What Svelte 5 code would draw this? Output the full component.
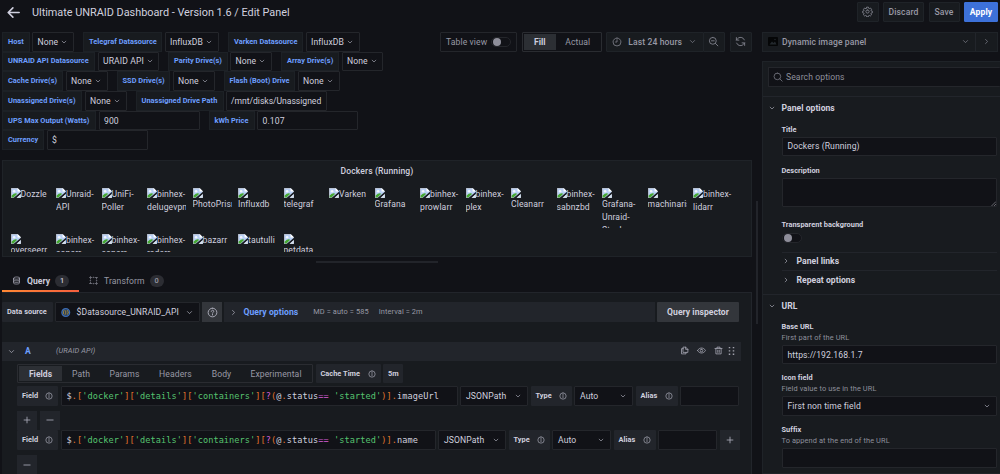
<script>
	// width of the label, then width of the control
	const variableRows = [
		[
			{ label: 'Host', lw: 27.5, value: 'None', w: 42, select: true },
			{ label: 'Telegraf Datasource', lw: 79, value: 'InfluxDB', w: 54.5, select: true },
			{ label: 'Varken Datasource', lw: 75, value: 'InfluxDB', w: 54.5, select: true }
		],
		[
			{ label: 'UNRAID API Datasource', lw: 93, value: 'URAID API', w: 61.5, select: true },
			{ label: 'Parity Drive(s)', lw: 59.5, value: 'None', w: 42, select: true },
			{ label: 'Array Drive(s)', lw: 58, value: 'None', w: 41, select: true }
		],
		[
			{ label: 'Cache Drive(s)', lw: 61, value: 'None', w: 42, select: true },
			{ label: 'SSD Drive(s)', lw: 53.5, value: 'None', w: 42, select: true },
			{ label: 'Flash (Boot) Drive', lw: 71.5, value: 'None', w: 42, select: true }
		],
		[
			{ label: 'Unassigned Drive(s)', lw: 80, value: 'None', w: 42, select: true },
			{ label: 'Unassigned Drive Path', lw: 88, value: '/mnt/disks/Unassigned', w: 101, tight: true }
		],
		[
			{ label: 'UPS Max Output (Watts)', lw: 94, value: '900', w: 101 },
			{ label: 'kWh Price', lw: 46, value: '0.107', w: 101 }
		],
		[{ label: 'Currency', lw: 42, value: '$', w: 101 }]
	]

	// wrap: the name does not fit beside the image and drops to the next line
	const dockers = [
		{ lines: ['Dozzle'] },
		{ lines: ['Unraid-', 'API'] },
		{ lines: ['UniFi-', 'Poller'] },
		{ lines: ['binhex-', 'delugevpn'] },
		{ wrap: true, lines: ['PhotoPrism'] },
		{ wrap: true, lines: ['Influxdb'] },
		{ wrap: true, lines: ['telegraf'] },
		{ lines: ['Varken'] },
		{ wrap: true, lines: ['Grafana'] },
		{ lines: ['binhex-', 'prowlarr'] },
		{ lines: ['binhex-', 'plex'] },
		{ wrap: true, lines: ['Cleanarr'] },
		{ lines: ['binhex-', 'sabnzbd'] },
		{ wrap: true, lines: ['Grafana-', 'Unraid-', 'Stack'] },
		{ wrap: true, lines: ['machinaris'] },
		{ lines: ['binhex-', 'lidarr'] },
		{ wrap: true, lines: ['overseerr'] },
		{ lines: ['binhex-', 'sonarr'] },
		{ lines: ['binhex-', 'sonarr'] },
		{ lines: ['binhex-', 'radarr'] },
		{ lines: ['bazarr'] },
		{ lines: ['tautulli'] },
		{ wrap: true, lines: ['netdata'] }
	]

	const queryTabs = [
		{ name: 'Fields', w: 43 },
		{ name: 'Path', w: 38 },
		{ name: 'Params', w: 49 },
		{ name: 'Headers', w: 53 },
		{ name: 'Body', w: 39 },
		{ name: 'Experimental', w: 70 }
	]

	const path = [
		['', '$'], ['o', '.['], ['g', "'docker'"], ['o', ']['], ['g', "'details'"], ['o', ']['],
		['g', "'containers'"], ['o', ']['], ['p', '?'], ['o', '('], ['', '@'], ['o', '.'],
		['', 'status'], ['p', '=='], ['', ' '], ['g', "'started'"], ['o', ')].']
	]
	const fields = [
		{ name: 'imageUrl', w: 397 },
		{ name: 'name', w: 375 }
	]

	const icons = {
		down: 'M6.5 9.5 12 15l5.5-5.5',
		right: 'M9.5 6.5 15 12l-5.5 5.5',
		back: 'M21 12H4M11 4.5 3.5 12l7.5 7.5',
		clock: 'M12 2.5a9.5 9.5 0 1 0 0 19a9.5 9.5 0 1 0 0-19M12 6.5V12H8.5',
		zoomOut: 'M10.5 3a7.5 7.5 0 1 0 0 15a7.5 7.5 0 1 0 0-15M16 16l5.5 5.5M7.5 10.5h6',
		search: 'M10.5 2.5a8 8 0 1 0 0 16a8 8 0 1 0 0-16M16.3 16.3 22 22',
		sync: 'M20.5 8.5A9 9 0 0 0 5 6.5L3 9M3 3.5V9h5.500M3.500 15.500A9 9 0 0 0 19 17.500L21 15M21 20.500V15h-5.500',
		gear: 'M9.500 5 10 2.500h4l.5 2.500 1.500.7 2.200-1.400 2.700 2.800-1.400 2 .6 1.600 2.400.6v3.700l-2.500.5-.6 1.500 1.400 2.200-2.700 2.700-2.100-1.400-1.500.6-.5 2.400h-4l-.5-2.500-1.500-.6-2.100 1.400-2.800-2.700 1.400-2.200-.6-1.500-2.400-.5v-3.700l2.500-.6.6-1.500-1.400-2 2.700-2.800L8 5.700zM12 8.500a3.500 3.500 0 1 0 0 7a3.500 3.500 0 1 0 0-7',
		database: 'M4 5.500C4 1.500 20 1.500 20 5.500S4 9.500 4 5.500V18.500C4 22.500 20 22.500 20 18.500V5.500M4 10c0 4 16 4 16 0M4 14.500c0 4 16 4 16 0',
		transform: 'M4 8V4h4M16 4h4v4M20 16v4h-4M8 20H4v-4M1.500 4H4V1.500M22.500 4H20M22.500 20H20v2.500M1.500 20H4M12 3v1.500M12 19.500v1.500M3 12h1.500M19.500 12h1.500',
		help: 'M12 2.500a9.500 9.500 0 1 0 0 19a9.500 9.500 0 1 0 0-19M9.200 9.500c.3-3.500 5.800-3.300 5.600 0-.2 2-2.800 1.700-2.800 4M12 16v1.500',
		info: 'M12 2.500a9.500 9.500 0 1 0 0 19a9.500 9.500 0 1 0 0-19M12 11v6M12 7v1.500',
		plus: 'M12 5v14M5 12h14',
		minus: 'M4.500 12h15',
		copy: 'M9 3h6l6 6v8H9zM15 3v6h6M9 7H4v14h12v-4',
		eye: 'M1.500 12C6 3 18 3 22.500 12 18 21 6 21 1.500 12M12 8.500a3.500 3.500 0 1 0 0 7a3.500 3.500 0 1 0 0-7',
		trash: 'M2.500 6.500h19M8 6V3h8v3M5 7v14h14V7M10 11v6M14 11v6'
	}
</script>

{#snippet icon(name, size = 10)}
	<svg class="icon" width={size} height={size} viewBox="0 0 24 24"><path d={icons[name]} /></svg>
{/snippet}

{#snippet broken()}
	<svg class="broken" width="10" height="10" viewBox="0 0 16 16">
		<path d="M.5.5h10l5 5v10H.5z" fill="#b9d0f5" stroke="#dfe3ea" />
		<path d="M10.500 0v5.500H16z" fill="#fff" />
		<circle cx="5" cy="5" r="2" fill="#f2f6fd" />
		<path d="M1 15v-3q5-5 9-3l-6 6z" fill="#46a832" />
		<path d="M4 16 16 6v3L9 16z" fill="#181b1f" />
		<path d="M9 15.500 15.500 10v5.500z" fill="#d6e0ee" />
	</svg>
{/snippet}

<div class="page">
	<div class="left">
		<header>
			{@render icon('back', 15)}
			<h1>Ultimate UNRAID Dashboard - Version 1.6 / Edit Panel</h1>
		</header>

		<div class="top">
			<div class="variables">
				{#each variableRows as row}
					<div class="var-row">
						{#each row as item}
							<div class="var">
								<div class="var-label" style="width: {item.lw}px">{item.label}</div>
								<div class="box" class:tight={item.tight} style="width: {item.w}px">
									<span>{item.value}</span>
									{#if item.select}{@render icon('down', 8)}{/if}
								</div>
							</div>
						{/each}
					</div>
				{/each}
			</div>

			<div class="toolbar">
				<div class="box table-view">Table view <i class="switch"></i></div>
				<div class="radio fill">
					<span class="active">Fill</span>
					<span>Actual</span>
				</div>
				<div class="button time">{@render icon('clock')}<b>Last 24 hours</b>{@render icon('down', 9)}</div>
				<div class="button zoom">{@render icon('zoomOut', 11)}</div>
				<div class="button refresh">{@render icon('sync', 11)}</div>
			</div>
		</div>

		<section class="preview">
			<h2>Dockers (Running)</h2>
			<div class="dockers">
				{#each dockers as docker}
					<div class="docker">
						{#if docker.wrap}
							<div class="image-line">{@render broken()}</div>
							{#each docker.lines as line}<div>{line}</div>{/each}
						{:else}
							{#each docker.lines as line, i}
								<div>{#if i === 0}{@render broken()}{/if}{line}</div>
							{/each}
						{/if}
					</div>
				{/each}
			</div>
		</section>

		<div class="splitter"></div>

		<nav>
			<div class="tab active">{@render icon('database', 9)}<span>Query</span><em>1</em></div>
			<div class="tab">{@render icon('transform', 9)}<span>Transform</span><em>0</em></div>
		</nav>

		<section class="queries">
			<div class="source">
				<div class="label ds">Data source</div>
				<div class="box picker">
					<svg width="11" height="11" viewBox="0 0 22 22">
						<circle cx="11" cy="11" r="9" fill="#263a58" stroke="#3c6db4" stroke-width="3" />
						<path d="M8 6q-2 0-2 3t-1 2q1 0 1 2t2 3M14 6q2 0 2 3t1 2q-1 0-1 2t-2 3M11 6v10" fill="none" stroke="#c9a63a" stroke-width="1.700" />
					</svg>
					<span>$Datasource_UNRAID_API</span>
					{@render icon('down', 9)}
				</div>
				<div class="help">{@render icon('help', 11)}</div>
				<div class="options-bar">
					{@render icon('right', 9)}
					<b>Query options</b>
					<small>MD = auto = 585</small>
					<small>Interval = 2m</small>
				</div>
				<div class="inspector">Query inspector</div>
			</div>

			<div class="query-head">
				{@render icon('down', 9)}
				<b>A</b>
				<em>(URAID API)</em>
				<div class="actions">
					{@render icon('copy', 9)}
					{@render icon('eye', 9)}
					{@render icon('trash', 9)}
					<svg width="8" height="10" viewBox="0 0 8 10">
						<path d="M1.500 1v9M5.500 1v9" stroke="#a0a1ac" stroke-width="1.500" stroke-dasharray="1.300 2" />
					</svg>
				</div>
			</div>

			<div class="editor">
				<div class="editor-row tabs-row">
					<div class="radio">
						{#each queryTabs as tab, i}
							<span class:active={i === 0} style="width: {tab.w}px">{tab.name}</span>
						{/each}
					</div>
					<div class="label cache">Cache Time {@render icon('info', 8)}</div>
					<div class="label five">5m</div>
				</div>

				{#each fields as field, i}
					<div class="editor-row">
						<div class="label field">Field {@render icon('info', 8)}</div>
						<div class="box code" style="width: {field.w}px">
							{#each path as [kind, text]}<span class={kind}>{text}</span>{/each}<span>{field.name}</span>
						</div>
						<div class="box json">JSONPath {@render icon('down', 8)}</div>
						<div class="label type">Type {@render icon('info', 8)}</div>
						<div class="box auto">Auto {@render icon('down', 8)}</div>
						<div class="label alias">Alias {@render icon('info', 8)}</div>
						<div class="box alias-input"></div>
						{#if i === 1}<div class="square">{@render icon('plus')}</div>{/if}
					</div>
					<div class="editor-row add-row">
						{#if i === 0}<div class="square">{@render icon('plus')}</div>{/if}
						<div class="square">{@render icon('minus')}</div>
					</div>
				{/each}
			</div>
		</section>
	</div>

	<div class="gutter"><i></i></div>

	<aside>
		<div class="buttons">
			<div class="button gear">{@render icon('gear', 11)}</div>
			<div class="button discard">Discard</div>
			<div class="button save">Save</div>
			<div class="button apply">Apply</div>
		</div>

		<div class="viz">
			<svg width="10" height="9" viewBox="0 0 20 18">
				<rect width="20" height="18" rx="2" fill="#050607" />
				<path d="m3 15 5-6 3 3 3-3 3 6z" fill="#23282d" />
				<circle cx="14" cy="5" r="1.500" fill="#23282d" />
			</svg>
			<b>Dynamic image panel</b>
			{@render icon('down', 9)}
			<div class="collapse">{@render icon('right', 9)}</div>
		</div>

		<div class="options">
			<div class="search-wrap">
				<div class="box search">{@render icon('search', 10)} Search options</div>
			</div>

			<div class="group">
				<h3>{@render icon('down', 8)}Panel options</h3>
				<div class="group-body">
					<h4 class="title-label">Title</h4>
					<div class="box">Dockers (Running)</div>
					<h4 class="description-label">Description</h4>
					<div class="box textarea">
						<svg width="5" height="5" viewBox="0 0 5 5"><path d="M.5 5 5 .5M3 5l2-2" stroke="#8b8d93" stroke-width=".7" /></svg>
					</div>
					<h4 class="transparent-label">Transparent background</h4>
					<i class="switch"></i>
					<div class="nested links">{@render icon('right', 8)}Panel links</div>
					<div class="nested repeat">{@render icon('right', 8)}Repeat options</div>
				</div>
			</div>

			<div class="group url">
				<h3>{@render icon('down', 8)}URL</h3>
				<div class="group-body">
					<div class="setting">
						<h4>Base URL</h4>
						<p>First part of the URL</p>
						<div class="box">https://192.168.1.7</div>
					</div>
					<div class="setting">
						<h4>Icon field</h4>
						<p>Field value to use in the URL</p>
						<div class="box spread">First non time field {@render icon('down', 8)}</div>
					</div>
					<div class="setting">
						<h4>Suffix</h4>
						<p>To append at the end of the URL</p>
						<div class="box"></div>
					</div>
				</div>
			</div>
		</div>
	</aside>
</div>

<style>
	:global(body) {
		background: #111217;
	}

	.page {
		display: flex;
		width: 1000px;
		height: 474px;
		overflow: hidden;
		background: #111217;
		color: #d0d0df;
		font-family: Roboto, sans-serif;
		font-size: 8.6px;
		letter-spacing: 0.1px;
		line-height: 12px;
		white-space: nowrap;
	}

	.page * {
		box-sizing: border-box;
	}

	h1, h2, h3, h4, p {
		margin: 0;
		font-weight: 500;
	}

	b {
		font-weight: 500;
	}

	.icon {
		flex: none;
		fill: none;
		stroke: currentColor;
		stroke-width: 2;
		stroke-linecap: round;
		stroke-linejoin: round;
		opacity: 0.8;
	}

	.left {
		width: 752px;
		flex: none;
		padding-left: 2px;
	}

	header {
		display: flex;
		align-items: center;
		gap: 11px;
		height: 25px;
		padding-left: 4px;
	}

	header .icon {
		stroke-width: 2.6;
		opacity: 1;
	}

	h1 {
		font-size: 10.9px;
		font-weight: 400;
		letter-spacing: -0.02px;
	}

	.top {
		display: flex;
		justify-content: space-between;
		height: 135px;
		padding-top: 7px;
	}

	.var-row {
		display: flex;
		gap: 9px;
		height: 19.7px;
	}

	.var {
		display: flex;
		gap: 2.5px;
	}

	.var-label {
		display: flex;
		align-items: center;
		height: 19.5px;
		padding-left: 5px;
		border: 1px solid #1d2126;
		background: #181b1f;
		color: #6e9fff;
		font-size: 7.4px;
		font-weight: 700;
		letter-spacing: 0.03px;
	}

	.box {
		display: flex;
		align-items: center;
		height: 19.5px;
		padding: 0 5px;
		border: 1px solid #24262b;
		border-radius: 1px;
		background: #111217;
	}

	.var .box {
		gap: 2px;
		padding: 0 2px 0 4.5px;
	}

	.var .tight {
		padding-left: 4px;
		letter-spacing: -0.03px;
	}

	.toolbar {
		display: flex;
		color: #9899a5;
	}

	.table-view {
		width: 77px;
		justify-content: space-between;
		margin-right: 5px;
	}

	.switch {
		display: block;
		width: 20px;
		height: 10px;
		padding: 1px;
		border: 1px solid #24262b;
		border-radius: 5px;
		background: #111217;
	}

	.switch::before {
		content: '';
		display: block;
		width: 8px;
		height: 8px;
		margin-top: -1px;
		border-radius: 50%;
		background: #8e8e9a;
	}

	.radio {
		display: flex;
		height: 19.5px;
		padding: 1px;
		border: 1px solid #2a2c31;
		border-radius: 1px;
		color: #9899a5;
	}

	.radio span {
		display: flex;
		align-items: center;
		justify-content: center;
	}

	.radio .active {
		background: #2c2f34;
		color: #ccccdc;
		font-weight: 700;
		letter-spacing: 0;
	}

	.fill {
		width: 80px;
		margin-right: 4px;
	}

	.fill span {
		width: 45px;
	}

	.fill .active {
		width: 32px;
	}

	.button {
		display: flex;
		align-items: center;
		justify-content: center;
		height: 19.5px;
		border: 1px solid #1f2328;
		border-radius: 1px;
		background: #181b1f;
		color: #9899a5;
		font-weight: 500;
	}

	.time {
		width: 97.5px;
		gap: 6px;
	}

	.zoom {
		width: 22px;
		margin: 0 5px 0 -1px;
	}

	.refresh {
		width: 22.5px;
	}

	.preview {
		height: 97px;
		border: 1px solid #1f2328;
		background: #181b1f;
	}

	h2 {
		padding-top: 3.5px;
		font-size: 8.6px;
		text-align: center;
	}

	.dockers {
		display: grid;
		grid-template-columns: repeat(16, 45.5px);
		grid-auto-rows: 46px;
		height: 64px;
		margin-top: 11px;
		padding-left: 7.5px;
		overflow: hidden;
	}

	.docker {
		width: 39px;
		height: 40px;
		overflow: hidden;
		line-height: 13px;
	}

	.docker div {
		height: 13px;
	}

	.docker .image-line {
		height: 10.6px;
		line-height: 10px;
	}

	.broken {
		vertical-align: -1px;
	}

	.splitter {
		width: 122px;
		height: 2px;
		margin: 4px auto 0;
		background: #22242a;
	}

	nav {
		display: flex;
		height: 29px;
		padding-top: 5px;
	}

	.tab {
		display: flex;
		align-items: center;
		height: 24px;
		padding: 3px 10px 0;
		color: #9899a5;
	}

	.tab:not(.active) {
		padding-bottom: 2px;
	}

	.tab span {
		margin: 0 5px 0 6px;
	}

	.tab em {
		width: 14px;
		border-radius: 7px;
		background: #2c2d33;
		font-size: 7.4px;
		font-style: normal;
		font-weight: 500;
		text-align: center;
	}

	.tab.active {
		width: 77px;
		border-bottom: 2px solid;
		border-image: linear-gradient(90deg, #ff8833, #f55f3e) 1;
		color: #ccccdc;
		font-weight: 700;
		letter-spacing: 0.03px;
	}

	.queries {
		height: 182px;
		padding-top: 9.4px;
		border: 1px solid #22252b;
		border-width: 1px 1px 0 0;
		background: #181b1f;
	}

	.source {
		display: flex;
		gap: 2px;
		height: 39.5px;
	}

	.label {
		display: flex;
		align-items: center;
		justify-content: space-between;
		height: 19.5px;
		padding: 0 5px;
		border-radius: 1px;
		background: #22252b;
		font-size: 7.4px;
		font-weight: 700;
		letter-spacing: 0.02px;
	}

	.ds {
		width: 51px;
	}

	.picker {
		width: 145px;
		gap: 6px;
	}

	.picker span {
		flex: 1;
	}

	.help {
		display: flex;
		align-items: center;
		justify-content: center;
		width: 20px;
		height: 19.5px;
		background: #33363b;
	}

	.options-bar {
		display: flex;
		align-items: center;
		width: 431px;
		height: 19.5px;
		padding-left: 5px;
		background: #22252b;
	}

	.options-bar b {
		margin: 0 15px 0 5.5px;
		color: #6e9fff;
		font-weight: 700;
		letter-spacing: 0.06px;
	}

	.options-bar small {
		margin-right: 10px;
		color: #9899a5;
		font-size: 7.4px;
	}

	.inspector {
		width: 82px;
		height: 19.5px;
		border-radius: 1px;
		background: #33363b;
		font-weight: 700;
		letter-spacing: 0.03px;
		line-height: 20px;
		text-align: center;
	}

	.query-head {
		display: flex;
		align-items: center;
		width: 739px;
		height: 19px;
		margin-bottom: 3px;
		padding-left: 5px;
		background: #22252b;
	}

	.query-head b {
		margin: 0 25px 0 9px;
		color: #6e9fff;
		font-weight: 700;
	}

	.query-head em {
		color: #9899a5;
		font-size: 7.4px;
	}

	.actions {
		display: flex;
		gap: 8px;
		margin-left: auto;
		padding-right: 5.5px;
	}

	.actions svg:last-child {
		margin-left: -3px;
	}

	.editor {
		padding-left: 15px;
	}

	.editor-row {
		display: flex;
		gap: 2.5px;
		height: 24.6px;
	}

	.tabs-row {
		height: 22.2px;
	}

	.add-row {
		height: 19.6px;
	}

	.cache {
		width: 65px;
	}

	.five {
		width: 20px;
	}

	.field {
		width: 41px;
	}

	.code {
		flex: none;
		overflow: hidden;
		font-family: 'DejaVu Sans Mono', monospace;
		font-size: 8.6px;
		letter-spacing: 0.07px;
		white-space: pre;
	}

	.o {
		color: #e0752d;
	}

	.g {
		color: #56c26f;
	}

	.p {
		color: #d65fd6;
	}

	.json {
		width: 68px;
		justify-content: space-between;
	}

	.type {
		width: 41px;
	}

	.auto {
		width: 59px;
		justify-content: space-between;
	}

	.alias {
		width: 42px;
	}

	.alias-input {
		width: 59px;
	}

	.square {
		display: flex;
		align-items: center;
		justify-content: center;
		width: 20px;
		height: 19.5px;
		background: #22252b;
	}

	.gutter {
		width: 9.5px;
		flex: none;
		padding: 201px 0 0 4px;
	}

	.gutter i {
		display: block;
		width: 2px;
		height: 123px;
		background: #22242a;
	}

	aside {
		width: 238.5px;
		flex: none;
	}

	.buttons {
		display: flex;
		justify-content: flex-end;
		gap: 4.5px;
		height: 32px;
		padding: 2px 2px 0 0;
	}

	.gear {
		width: 22px;
	}

	.discard {
		width: 41px;
	}

	.save {
		width: 31px;
	}

	.apply {
		width: 34px;
		border-color: #3d71d9;
		background: #3d71d9;
		color: #fff;
		font-weight: 700;
	}

	.viz {
		display: flex;
		align-items: center;
		width: 236px;
		height: 19.5px;
		padding-left: 5px;
		border: 1px solid #1f2328;
		background: #181b1f;
		color: #9899a5;
	}

	.viz b {
		flex: 1;
		margin-left: 4.5px;
	}

	.collapse {
		display: flex;
		align-items: center;
		justify-content: center;
		width: 22px;
		height: 18px;
		margin-left: 5px;
		border-left: 1px solid #22252b;
	}

	.options {
		height: 413px;
		margin-top: 9.5px;
		border: 1px solid #1f2328;
		border-right: 0;
		background: #181b1f;
	}

	.search-wrap {
		height: 34.4px;
		padding: 5px 0 0 5px;
	}

	.search {
		gap: 3.5px;
		padding-left: 4px;
		border-right: 0;
		color: #8e8f9b;
	}

	.group {
		height: 197.6px;
		border-top: 1px solid #22252b;
		padding-right: 3px;
	}

	h3 {
		display: flex;
		align-items: center;
		gap: 6px;
		height: 21.5px;
		padding-left: 5px;
		font-size: 8.6px;
		font-weight: 700;
		letter-spacing: 0.03px;
	}

	.group-body {
		padding-left: 19px;
	}

	h4 {
		height: 10px;
		font-size: 7.4px;
		font-weight: 700;
		letter-spacing: 0.02px;
		line-height: 10px;
	}

	.title-label {
		margin: 5.7px 0 2px;
	}

	.description-label {
		margin: 9.5px 0 2px;
	}

	.textarea {
		height: 29.5px;
		align-items: flex-end;
		justify-content: flex-end;
		padding: 0;
	}

	.transparent-label {
		margin: 13.2px 0 2.5px;
	}

	.nested {
		display: flex;
		align-items: center;
		gap: 7px;
		height: 18.2px;
		border-top: 1px solid #22252b;
		font-weight: 700;
		letter-spacing: 0.03px;
	}

	.links {
		margin-top: 9px;
	}

	.url h3 {
		margin-bottom: 5.3px;
	}

	.setting {
		height: 51.7px;
	}

	.setting p {
		height: 13px;
		color: #8e8f9b;
		font-size: 7.4px;
		font-weight: 400;
	}

	.spread {
		justify-content: space-between;
	}
</style>
